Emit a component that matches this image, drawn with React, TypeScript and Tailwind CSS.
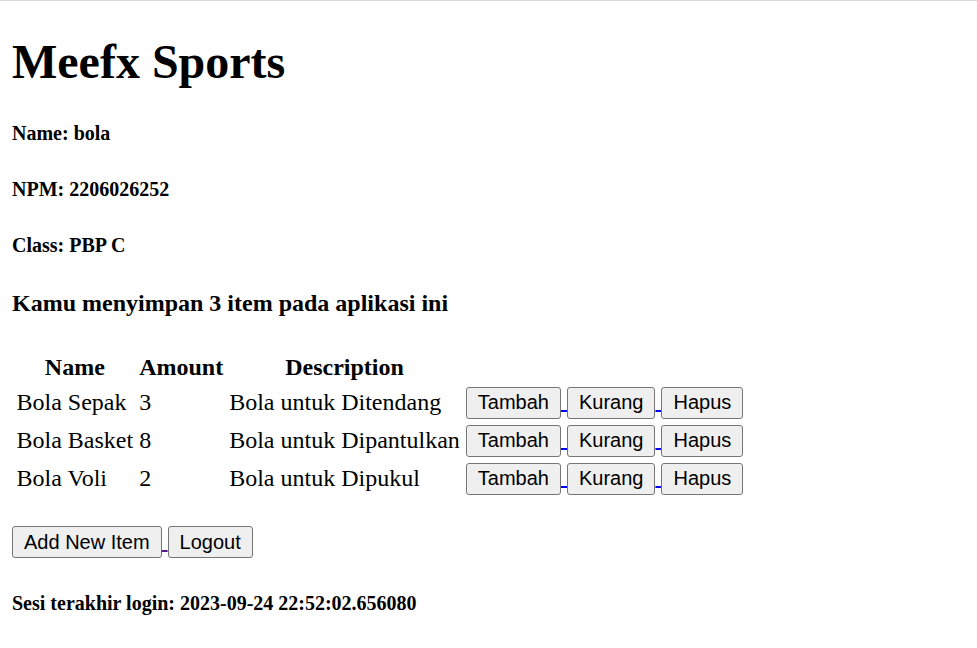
const items = [
  { name: "Bola Sepak", amount: 3, description: "Bola untuk Ditendang" },
  { name: "Bola Basket", amount: 8, description: "Bola untuk Dipantulkan" },
  { name: "Bola Voli", amount: 2, description: "Bola untuk Dipukul" },
];

const btn =
  "inline-block h-[32px] px-[11px] align-baseline bg-[#efefef] border border-[#767676] rounded-[3px] text-black text-[20px] leading-[23px] font-['Liberation_Sans',Arial,sans-serif] no-underline";

const App = () => {
  return (
    <div className="min-h-screen bg-white text-black leading-[normal] font-['Liberation_Serif','Times_New_Roman',serif]">
      {/* top border */}
      <div className="h-px bg-[#d9d9d9]"></div>

      <div className="px-[12px] pb-[12px]">
        <h1 className="text-[48px] font-bold leading-[normal] mt-[33px] mb-[32px]">Meefx Sports</h1>

        <h5 className="text-[20px] font-bold leading-[normal] my-[33px]">Name: bola</h5>
        <h5 className="text-[20px] font-bold leading-[normal] my-[33px]">NPM: 2206026252</h5>
        <h5 className="text-[20px] font-bold leading-[normal] my-[33px]">Class: PBP C</h5>

        <h4 className="text-[24px] font-bold leading-[normal] mt-[33px] mb-[32px]">Kamu menyimpan 3 item pada aplikasi ini</h4>

        {/* Items table */}
        <table className="border-separate border-spacing-[3px] text-[24px] leading-[normal]">
          <tbody>
            <tr>
              <th className="p-[1.5px] font-bold text-center">Name</th>
              <th className="p-[1.5px] font-bold text-center">Amount</th>
              <th className="p-[1.5px] font-bold text-center">Description</th>
            </tr>
            {items.map((item) => (
              <tr key={item.name}>
                <td className="p-[1.5px] whitespace-nowrap">{item.name}</td>
                <td className="p-[1.5px]">{item.amount}</td>
                <td className="p-[1.5px] whitespace-nowrap">{item.description}</td>
                <td className="p-[1.5px] whitespace-nowrap">
                  <a href="#" className="text-[#0000ee] underline decoration-[2px]">
                    <button className={btn}>Tambah</button>{" "}
                  </a>
                  <a href="#" className="text-[#0000ee] underline decoration-[2px]">
                    <button className={btn}>Kurang</button>{" "}
                  </a>
                  <a href="#" className="text-[#0000ee] underline decoration-[2px]">
                    <button className={btn}>Hapus</button>
                  </a>
                </td>
              </tr>
            ))}
          </tbody>
        </table>

        {/* Actions */}
        <div className="text-[24px] leading-[normal] mt-[27px] whitespace-nowrap">
          <a href="#" className="text-[#551a8b] underline decoration-[2px]">
            <button className={btn}>Add New Item</button>{" "}
          </a>
          <a href="#" className="text-[#551a8b] underline decoration-[2px]">
            <button className={btn}>Logout</button>
          </a>
        </div>

        <h5 className="text-[20px] font-bold leading-[normal] mt-[34px] mb-[33px]">Sesi terakhir login: 2023-09-24 22:52:02.656080</h5>
      </div>
    </div>
  );
};

export default App;
